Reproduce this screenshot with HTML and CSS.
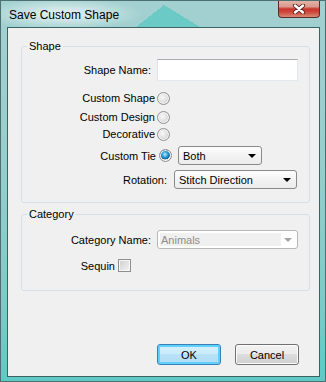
FILE: index.html
```html
<!DOCTYPE html>
<html lang="en">

<head>
    <meta charset="UTF-8">
    <title>Save Custom Shape</title>
    <link rel="stylesheet" href="styles.css">
</head>

<body>
    <div class="window">
        <div class="titlebar">
            <span class="title">Save Custom Shape</span>
            <span class="close">
                <svg width="14" height="10" viewBox="0 0 14 10">
                    <path d="M3 1.5 L11 8.5 M11 1.5 L3 8.5" stroke="#5a1d1d" stroke-width="4.2" stroke-linecap="round"/>
                    <path d="M3 1.5 L11 8.5 M11 1.5 L3 8.5" stroke="#ffffff" stroke-width="2.4" stroke-linecap="round"/>
                </svg>
            </span>
        </div>
        <div class="client">
            <fieldset class="group group-shape">
                <legend>Shape</legend>
                <div class="row row-name">
                    <span class="lbl lbl-name">Shape Name:</span>
                    <span class="textbox"></span>
                </div>
                <div class="row row-radio row-first">
                    <span class="lbl lbl-radio">Custom Shape</span>
                    <span class="radio"></span>
                </div>
                <div class="row row-radio row-design">
                    <span class="lbl lbl-radio">Custom Design</span>
                    <span class="radio"></span>
                </div>
                <div class="row row-radio row-deco">
                    <span class="lbl lbl-radio">Decorative</span>
                    <span class="radio"></span>
                </div>
                <div class="row row-tie">
                    <span class="lbl lbl-tie">Custom Tie</span>
                    <span class="radio checked"></span>
                    <span class="combo combo-tie">Both<span class="arrow"></span></span>
                </div>
                <div class="row row-rotation">
                    <span class="lbl lbl-rotation">Rotation:</span>
                    <span class="combo combo-rotation">Stitch Direction<span class="arrow"></span></span>
                </div>
            </fieldset>

            <fieldset class="group group-category">
                <legend>Category</legend>
                <div class="row row-catname">
                    <span class="lbl lbl-name">Category Name:</span>
                    <span class="combo combo-disabled"><span class="combo-field">Animals</span><span class="arrow"></span></span>
                </div>
                <div class="row row-sequin">
                    <span class="lbl lbl-sequin">Sequin</span>
                    <span class="checkbox"></span>
                </div>
            </fieldset>

            <div class="actions">
                <span class="btn btn-default">OK</span>
                <span class="btn">Cancel</span>
            </div>
        </div>
    </div>
</body>

</html>
```

FILE: styles.css
```css
body {
    margin: 0;
    font-family: "Liberation Sans", Arial, sans-serif;
    font-size: 11px;
    color: #000;
}

.window {
    width: 326px;
    height: 382px;
    box-sizing: border-box;
    border: 1px solid #4d6f6f;
    display: flex;
    flex-direction: column;
    background:
        radial-gradient(ellipse 80px 16px at 62px 13px, rgba(235, 245, 245, 0.95), rgba(235, 245, 245, 0) 100%),
        linear-gradient(to bottom right, transparent 50%, #6ccac6 50%) 135px 4px / 28px 22px no-repeat,
        linear-gradient(to bottom left, transparent 50%, #6ccac6 50%) 163px 4px / 36px 22px no-repeat,
        linear-gradient(#a3d0d0, #97cfcd 40%, #7ccbc8 80%, #5fc9c4);
}

.titlebar {
    height: 26px;
    display: flex;
    justify-content: space-between;
    align-items: flex-start;
}

.title {
    font-size: 12px;
    margin: 7px 0 0 8px;
    color: #000;
}

.close {
    width: 42px;
    height: 17px;
    margin-right: 5px;
    box-sizing: border-box;
    border: 1px solid #5b2b2b;
    border-top: none;
    border-radius: 0 0 4px 4px;
    display: flex;
    align-items: center;
    justify-content: center;
    background: linear-gradient(#e2b3a8, #d89a8c 35%, #c8332a 50%, #cf4a3c 70%, #d98a78);
}

.client {
    flex: 1;
    margin: 0 5px 4px 6px;
    border: 1px solid #3d6464;
    background-color: #f0f0f0;
    display: flex;
    flex-direction: column;
    padding: 12px 9px 11px 13px;
}

.group {
    margin: 0;
    padding: 0;
    border: 1px solid #d5dfe5;
    border-radius: 3px;
}

.group legend {
    margin-left: 5px;
    padding: 0 2px;
    line-height: 13px;
}

.group-shape {
    padding-bottom: 13px;
}

.group-category {
    margin-top: 5px;
    padding-bottom: 18px;
}

.row {
    display: flex;
    align-items: center;
}

.lbl {
    text-align: right;
    white-space: nowrap;
}

.lbl-name {
    width: 129px;
    margin-right: 6px;
}

.lbl-radio {
    width: 133px;
    margin-right: 2px;
}

.lbl-tie {
    width: 134px;
    margin-right: 3px;
}

.lbl-rotation {
    width: 145px;
    margin-right: 7px;
}

.lbl-sequin {
    width: 93px;
    margin-right: 3px;
}

.row-name {
    margin-top: 6px;
    height: 22px;
}

.row-radio {
    height: 16px;
}

.row-first {
    margin-top: 9px;
}

.row-design {
    margin-top: 3px;
}

.row-deco {
    margin-top: 1px;
}

.row-tie {
    margin-top: 4px;
    height: 19px;
}

.row-rotation {
    margin-top: 5px;
    height: 19px;
}

.row-catname {
    margin-top: 9px;
    height: 19px;
}

.row-sequin {
    margin-top: 10px;
    height: 13px;
}

.textbox {
    width: 141px;
    height: 22px;
    box-sizing: border-box;
    border: 1px solid;
    border-color: #abadb3 #e3e9ef #e3e9ef #e2e3ea;
    background-color: #fff;
}

.radio {
    width: 13px;
    height: 13px;
    box-sizing: border-box;
    border: 1px solid #8f9090;
    border-radius: 50%;
    background: radial-gradient(circle at 40% 40%, #f8f8f8, #d6d6d6 70%, #c8c8c8);
    box-shadow: inset 0 0 0 1px #f4f4f4;
}

.radio.checked {
    background:
        radial-gradient(circle at 45% 40%, #bfeaff 0, #2fa3dc 30%, #0d5d96 55%, transparent 58%),
        radial-gradient(circle at 40% 40%, #f8f8f8, #d6d6d6 70%, #c8c8c8);
}

.checkbox {
    width: 13px;
    height: 13px;
    box-sizing: border-box;
    border: 1px solid #8f8f8f;
    background: linear-gradient(135deg, #cfcfcf, #f4f4f4);
    box-shadow: inset 0 0 0 1px #f6f6f6;
}

.combo {
    height: 19px;
    box-sizing: border-box;
    border: 1px solid #8a8a8a;
    border-radius: 3px;
    background: linear-gradient(#fdfdfd, #f3f3f3 50%, #ececec);
    display: flex;
    align-items: center;
    justify-content: space-between;
    padding: 0 5px 0 4px;
    white-space: nowrap;
}

.combo-tie {
    width: 84px;
    margin-left: 6px;
}

.combo-rotation {
    width: 123px;
}

.arrow {
    width: 0;
    height: 0;
    border-left: 4px solid transparent;
    border-right: 4px solid transparent;
    border-top: 4px solid #000;
}

.combo-disabled {
    width: 141px;
    border-color: #b5b8ba;
    background-color: #fff;
    background-image: none;
    padding: 2px 5px 2px 2px;
}

.combo-disabled .combo-field {
    width: 120px;
    height: 100%;
    display: flex;
    align-items: center;
    padding-left: 1px;
    background-color: #f0f0f0;
    color: #8d8d8d;
}

.combo-disabled .arrow {
    border-top-color: #a6a6a6;
}

.actions {
    margin-top: auto;
    display: flex;
    justify-content: flex-end;
    gap: 14px;
    padding-right: 11px;
}

.btn {
    width: 64px;
    height: 21px;
    box-sizing: border-box;
    border: 1px solid #707070;
    border-radius: 3px;
    display: flex;
    align-items: center;
    justify-content: center;
    background: linear-gradient(#f2f2f2, #ebebeb 50%, #dddddd 50%, #cfcfcf);
    box-shadow: inset 0 0 0 1px #fcfcfc;
}

.btn-default {
    border-color: #3c7fb1;
    background: linear-gradient(#d7f0fc, #c8eafb 50%, #b9e2f8 50%, #afdcf6);
    box-shadow: inset 0 0 0 2px #5fd0fb;
}
```
